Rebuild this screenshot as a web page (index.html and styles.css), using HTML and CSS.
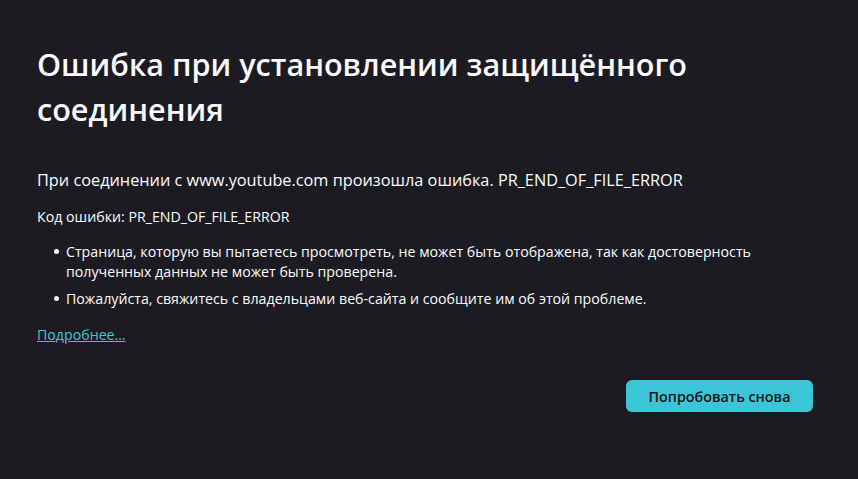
FILE: index.html
```html
<!DOCTYPE html>
<html lang="ru">
<head>
    <meta charset="UTF-8">
    <title>Ошибка при установлении защищённого соединения</title>
    <link rel="stylesheet" href="styles.css">
</head>
<body>
    <div class="container">
        <h1 class="title">Ошибка при установлении защищённого соединения</h1>
        <p class="intro">При соединении с www.youtube.com произошла ошибка. PR_END_OF_FILE_ERROR</p>
        <p class="code">Код ошибки: PR_END_OF_FILE_ERROR</p>
        <ul class="reasons">
            <li>Страница, которую вы пытаетесь просмотреть, не может быть отображена, так как достоверность полученных данных не может быть проверена.</li>
            <li>Пожалуйста, свяжитесь с владельцами веб-сайта и сообщите им об этой проблеме.</li>
        </ul>
        <a class="more" href="#">Подробнее…</a>
        <div class="buttons">
            <button class="retry">Попробовать снова</button>
        </div>
    </div>
</body>
</html>
```

FILE: styles.css
```css
html, body{
    margin: 0;
    background-color: #1c1b22;
    color: #fbfbfe;
    font-family: "Open Sans", "Noto Sans", sans-serif;
}
.container{
    width: 776px;
    padding: 42px 0 0 37px;
}
.title{
    font-size: 30.6px;
    font-weight: 600;
    line-height: 45px;
    margin: 0 0 37px 0;
    width: 700px;
}
.intro{
    font-size: 16.3px;
    line-height: 22px;
    margin: 0 0 16px 0;
}
.code{
    font-size: 14.2px;
    line-height: 20px;
    margin: 0 0 15px 0;
}
.reasons{
    margin: 0;
    padding-left: 29px;
    width: 700px;
    list-style: none;
    font-size: 14.2px;
    line-height: 19.5px;
}
.reasons li{
    margin-bottom: 7.5px;
}
.reasons li::before{
    content: "";
    display: inline-block;
    width: 5px;
    height: 5px;
    border-radius: 50%;
    background-color: currentColor;
    margin-left: -12px;
    margin-right: 7px;
    vertical-align: 3px;
}
.more{
    display: inline-block;
    margin-top: 9px;
    font-size: 14.2px;
    line-height: 19.5px;
    color: #3bc7d8;
}
.buttons{
    display: flex;
    justify-content: flex-end;
    margin-top: 35.5px;
}
.retry{
    width: 187px;
    height: 32px;
    border: none;
    border-radius: 6px;
    background-color: #3bc6d8;
    color: #15141a;
    font-family: "Open Sans", sans-serif;
    font-size: 14.3px;
    font-weight: 600;
}
```
